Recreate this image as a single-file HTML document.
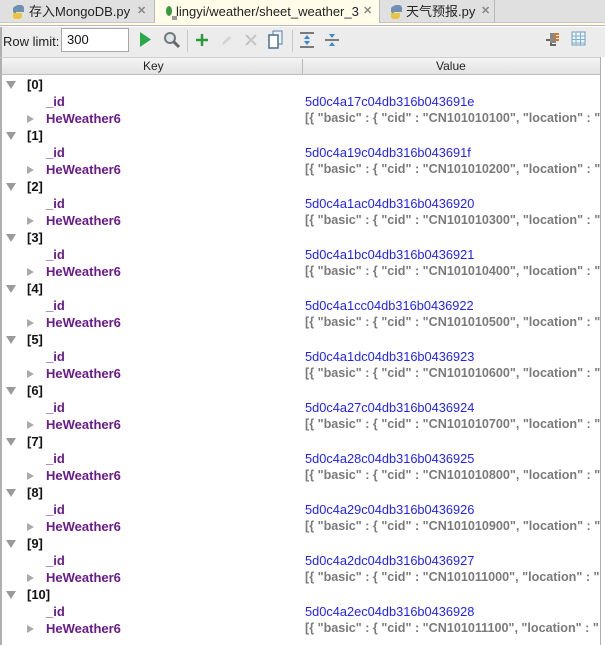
<!DOCTYPE html>
<html><head><meta charset="utf-8"><style>
*{margin:0;padding:0;box-sizing:border-box}
body{width:605px;height:645px;overflow:hidden;background:#fff;font-family:"Liberation Sans","Noto Sans CJK SC",sans-serif;font-size:12px;position:relative}
.abs{position:absolute}
.tabbar{left:0;top:0;width:605px;height:23px;background:#e0e0e0;border-bottom:1px solid #c8c8c8}
.tab{top:0;height:23px;border-right:1px solid #b8b8b8;font-size:13px;line-height:23px;color:#222;white-space:nowrap;overflow:hidden}
.x{color:#888;font-size:11px;font-weight:bold}
.band{left:0;top:23px;width:605px;height:3px;background:#fdfbe6;border-bottom:1px solid #b8b8b8}
.toolbar{left:0;top:27px;width:605px;height:30px;background:#ececec;border-left:2px solid #b0b0b0}
.hdr{left:0;top:57px;width:601px;height:18px;background:linear-gradient(#f4f4f4,#e2e2e2);border-bottom:1px solid #bdbdbd;border-top:1px solid #d0d0d0;border-left:2px solid #b0b0b0;font-size:12px;line-height:17px;color:#222}
.row{position:absolute;left:0;height:17px;line-height:17px;font-size:13px;font-weight:bold;white-space:nowrap}
.idx{color:#111}
.key{color:#6a1b8a}
.id{color:#1f1fff;font-weight:normal;font-size:12.8px}
.val{color:#7a7a7a;font-size:12.6px}
.tri{position:absolute;width:0;height:0}
</style></head><body>
<div class="abs tabbar"></div>
<div class="abs tab" style="left:0;width:155px">
<svg width="16" height="16" style="position:absolute;left:10px;top:4px"><path d="M7 1h4a3 3 0 0 1 3 3v4H6v2H3V5a3 3 0 0 1 3-3z" fill="#6f8fb3"/><path d="M5 15h4a3 3 0 0 0 3-3V9H4v-1H3v5a3 3 0 0 0 2 2z" fill="#e8c440"/></svg>
<span style="position:absolute;left:29px">存入MongoDB.py</span><span class="x abs" style="left:137px">✕</span></div>
<div class="abs tab" style="left:155px;width:225px;background:#fffdea;height:24px">
<svg width="14" height="18" style="position:absolute;left:10px;top:4px"><ellipse cx="4" cy="7" rx="3" ry="5" fill="#3a9a3a"/><rect x="7" y="12" width="5" height="4" fill="#999"/></svg>
<span style="position:absolute;left:21px">lingyi/weather/sheet_weather_3</span><span class="x abs" style="left:208px">✕</span></div>
<div class="abs tab" style="left:380px;width:115px">
<svg width="16" height="16" style="position:absolute;left:8px;top:4px"><path d="M7 1h4a3 3 0 0 1 3 3v4H6v2H3V5a3 3 0 0 1 3-3z" fill="#6f8fb3"/><path d="M5 15h4a3 3 0 0 0 3-3V9H4v-1H3v5a3 3 0 0 0 2 2z" fill="#e8c440"/></svg>
<span style="position:absolute;left:26px">天气预报.py</span><span class="x abs" style="left:101px">✕</span></div>
<div class="abs band"></div>
<div class="abs toolbar">
<span class="abs" style="left:1px;top:7px;font-size:13px;color:#222">Row limit:</span>
<div class="abs" style="left:59px;top:1px;width:68px;height:24px;background:#fff;border:1px solid #a8a8a8;font-size:13px;line-height:22px;padding-left:5px;color:#111">300</div>
<svg class="abs" style="left:136px;top:4px" width="14" height="17"><path d="M2 1L13 8.5 2 16z" fill="#2aa84a"/></svg>
<svg class="abs" style="left:161px;top:4px" width="18" height="18"><circle cx="7" cy="7" r="5" fill="#dde6ee" stroke="#777" stroke-width="2"/><path d="M10.5 10.5L16 16" stroke="#666" stroke-width="3"/></svg>
<div class="abs" style="left:185px;top:3px;width:1px;height:22px;background:#c8c8c8"></div>
<svg class="abs" style="left:192px;top:5px" width="16" height="16"><path d="M8 2v12M2 8h12" stroke="#2a9a3a" stroke-width="2.5"/></svg>
<svg class="abs" style="left:217px;top:6px" width="14" height="14"><path d="M3 12l1-3 6-6 2 2-6 6z" fill="#d4d4d4"/></svg>
<svg class="abs" style="left:242px;top:6px" width="14" height="14"><path d="M2 2l10 10M12 2L2 12" stroke="#c4c4c4" stroke-width="2"/></svg>
<svg class="abs" style="left:266px;top:3px" width="16" height="20"><rect x="5" y="1" width="9" height="13" fill="#eef3f8" stroke="#5a7fa0"/><rect x="1" y="5" width="9" height="13" fill="#fff" stroke="#4a6f90" stroke-width="1.5"/></svg>
<div class="abs" style="left:290px;top:3px;width:1px;height:22px;background:#c8c8c8"></div>
<svg class="abs" style="left:297px;top:5px" width="16" height="16"><path d="M1 1h14M1 15h14" stroke="#555" stroke-width="1.5"/><path d="M8 3l-3 4h6zM8 13l-3-4h6z" fill="#3a8ad0"/></svg>
<svg class="abs" style="left:322px;top:5px" width="16" height="16"><path d="M1 8h14" stroke="#555" stroke-width="1.5"/><path d="M8 6l-3-4h6zM8 10l-3 4h6z" fill="#3a8ad0"/></svg>
<svg class="abs" style="left:543px;top:4px" width="16" height="16"><path d="M1 9h5v5h5" fill="none" stroke="#666" stroke-width="2"/><rect x="5" y="2" width="6" height="10" fill="#888"/><path d="M9 3h5M9 6h5M9 9h5" stroke="#d07a30" stroke-width="2"/></svg>
<svg class="abs" style="left:569px;top:4px" width="16" height="16"><rect x="1" y="1" width="13" height="13" fill="#eef5fb" stroke="#7a9ab5"/><path d="M1 5h13M1 8.5h13M1 12h13M5 1v13M9.5 1v13" stroke="#7ab0d8"/></svg>
</div>
<div class="abs hdr"><span class="abs" style="left:141px">Key</span><div class="abs" style="left:300px;top:1px;width:1px;height:15px;background:#b8b8b8"></div><span class="abs" style="left:434px">Value</span></div>
<div class="abs" style="left:0;top:75px;width:2px;height:570px;background:#b0b0b0"></div>
<div id="rows"></div>
<script>
var ids=["5d0c4a17c04db316b043691e","5d0c4a19c04db316b043691f","5d0c4a1ac04db316b0436920","5d0c4a1bc04db316b0436921","5d0c4a1cc04db316b0436922","5d0c4a1dc04db316b0436923","5d0c4a27c04db316b0436924","5d0c4a28c04db316b0436925","5d0c4a29c04db316b0436926","5d0c4a2dc04db316b0436927","5d0c4a2ec04db316b0436928"];
var h="";
for(var i=0;i<11;i++){var t=76+i*51;var c="CN1010"+(10100+i*100);
h+='<div class="tri" style="left:6px;top:'+(t+5)+'px;border-left:5px solid transparent;border-right:5px solid transparent;border-top:8px solid #9a9a9a"></div>';
h+='<div class="row idx" style="top:'+t+'px;left:27px">['+i+']</div>';
h+='<div class="row key" style="top:'+(t+17)+'px;left:46px">_id</div>';
h+='<div class="row id" style="top:'+(t+17)+'px;left:305px">'+ids[i]+'</div>';
h+='<div class="tri" style="left:27px;top:'+(t+39)+'px;border-top:4px solid transparent;border-bottom:4px solid transparent;border-left:7px solid #aaa"></div>';
h+='<div class="row key" style="top:'+(t+34)+'px;left:46px">HeWeather6</div>';
h+='<div class="row val" style="top:'+(t+34)+'px;left:305px">[{ "basic" : { "cid" : "'+c+'", "location" : "</div>';}
document.getElementById("rows").innerHTML=h;
</script>
<div class="abs" style="left:600px;top:57px;width:5px;height:588px;background:#fff;border-left:1px solid #b0b0b0"></div>
</body></html>
